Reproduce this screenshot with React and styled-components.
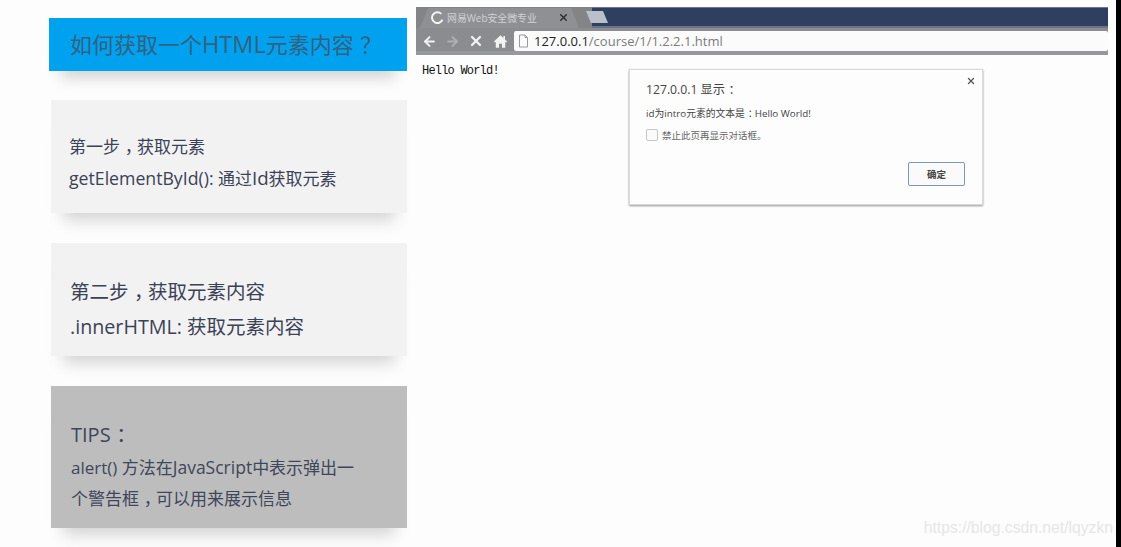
import React from "react";
import styled, { createGlobalStyle } from "styled-components";
import { ArrowLeft, ArrowRight, X } from "lucide-react";

const GlobalStyle = createGlobalStyle`
  html, body {
    margin: 0;
    padding: 0;
    background: #fdfdfd;
  }
  body {
    font-family: "Open Sans", "Noto Sans CJK SC", sans-serif;
  }
`;

const Page = styled.div`
  position: relative;
  width: 1121px;
  height: 547px;
  overflow: hidden;
  display: flex;
  background: #fdfdfd;
`;
const LeftColumn = styled.div`
  width: 358px;
  margin-left: 49px;
  padding-top: 18px;
  display: flex;
  flex-direction: column;
  flex-shrink: 0;
`;
const Card = styled.div`
  box-sizing: border-box;
  height: ${(p) => p.$height}px;
  margin-left: ${(p) => p.$inset || 0}px;
  margin-bottom: ${(p) => p.$gap || 0}px;
  padding: ${(p) => p.$top}px 0 0 ${(p) => p.$left}px;
  background: ${(p) => p.$bg};
  color: ${(p) => p.$color || "#3b4256"};
  box-shadow: 0 19px 15px -12px rgba(0, 0, 0, 0.17);
`;
const Line = styled.div`
  font-size: ${(p) => p.$size}px;
  line-height: ${(p) => p.$height}px;
  white-space: nowrap;
`;
// latin runs are a bit wider in the original font
const Latin = styled.span`
  font-size: ${(p) => p.$scale}em;
`;
const Punct = styled.span`
  font-feature-settings: "halt";
  margin-left: 0.28em;
  margin-right: 0.22em;
`;
const Browser = styled.div`
  width: 692px;
  margin: 7px 0 0 9px;
  flex-shrink: 0;
`;
const TabBar = styled.div`
  height: 21px;
  display: flex;
  background: #2f3f60;
  box-shadow: inset 0 -2px 0 #6c7486, inset 0 1px 0 #6f7788;
`;
const TabStrip = styled.div`
  width: 172px;
  padding-left: 4px;
  display: flex;
  background: #838488;
`;
const Tab = styled.div`
  width: 159px;
  height: 21px;
  box-sizing: border-box;
  padding-left: 11px;
  display: flex;
  align-items: center;
  background: #8f9094;
  clip-path: polygon(8px 1px, 151px 1px, 159px 100%, 0 100%);
  color: #d2d2d5;
  font-size: 9.9px;
`;
const TabTitle = styled.span`
  margin-left: 3px;
  width: 111px;
  white-space: nowrap;
  overflow: hidden;
`;
const NewTab = styled.div`
  width: 22px;
  height: 12px;
  margin: 4px 0 0 -6px;
  background: #b9c0ca;
  clip-path: polygon(0 0, 17px 0, 22px 100%, 5px 100%);
`;
const Toolbar = styled.div`
  height: 20px;
  padding: 3px 0 0 6px;
  display: flex;
  align-items: center;
  background: #8b8c90;
  color: #f2f2f2;
`;
const NavSlot = styled.div`
  width: ${(p) => p.$width || 23}px;
  display: flex;
  align-items: center;
  opacity: ${(p) => (p.$dim ? 0.35 : 1)};
`;
const Omnibox = styled.div`
  flex: 1;
  height: 20px;
  box-sizing: border-box;
  padding-left: 4px;
  display: flex;
  align-items: center;
  background: #fbfbfb;
  border-radius: 2px;
  font-size: 13px;
  color: #7b7b7b;
`;
const Host = styled.span`
  margin-left: 5px;
  font-weight: 500;
  color: #222;
`;
const ToolbarEdge = styled.div`
  height: 4px;
  background: #97989b;
`;
const PageText = styled.div`
  margin: 9px 0 0 6px;
  font-family: "Liberation Mono", monospace;
  font-size: 12px;
  line-height: 14px;
  letter-spacing: -0.8px;
  color: #111;
`;
const Dialog = styled.div`
  position: absolute;
  left: 629px;
  top: 69px;
  width: 354px;
  height: 136px;
  box-sizing: border-box;
  padding: 13px 0 0 16px;
  background: #fdfdfd;
  border: 1px solid #d9d9d9;
  box-shadow: 0 1px 2px rgba(0, 0, 0, 0.4);
  color: #444;
`;
const DialogClose = styled.div`
  position: absolute;
  top: 6px;
  right: 6px;
  display: flex;
  color: #555;
`;
const DialogTitle = styled.div`
  font-size: 12.2px;
  line-height: 13px;
  color: #444;
`;
const DialogText = styled.div`
  margin-top: 11px;
  font-size: 9.8px;
  line-height: 14px;
`;
const CheckRow = styled.div`
  margin-top: 7px;
  display: flex;
  align-items: center;
  font-size: 9.5px;
  color: #666;
`;
const CheckBox = styled.span`
  width: 10px;
  height: 10px;
  margin-right: 4px;
  border: 1px solid #c6c6c6;
  border-radius: 2px;
  background: #fafafa;
`;
const OkButton = styled.div`
  position: absolute;
  right: 17px;
  bottom: 18px;
  width: 55px;
  height: 22px;
  display: flex;
  align-items: center;
  justify-content: center;
  border: 1px solid #7d97b8;
  border-radius: 2px;
  font-size: 9.5px;
  font-weight: 700;
  color: #444;
  background: #fafafa;
`;
const Watermark = styled.div`
  position: absolute;
  right: 8px;
  bottom: 10px;
  font-family: "Liberation Sans", sans-serif;
  font-size: 15.7px;
  line-height: 18px;
  color: #e6e6e6;
`;
const BlackEdge = styled.div`
  position: absolute;
  top: 0;
  right: 0;
  bottom: 0;
  width: 5px;
  background: #000;
`;

const Spinner = () => (
  <svg width="13" height="13" viewBox="0 0 12 12" fill="none">
    <path d="M9.5 2.6A5 5 0 1 0 10.6 8" stroke="#f4f4f4" strokeWidth="1.8" />
  </svg>
);

const HomeIcon = () => (
  <svg width="15" height="15" viewBox="0 0 13 13" fill="#f2f2f2">
    <path d="M6.5 1 0.8 6.6 1.6 7.4 2.4 6.8V12H5.2V8.4H7.8V12H10.6V6.8L11.4 7.4 12.2 6.6 10.4 4.8V1.8H9V3.4Z" />
  </svg>
);

const PageIcon = () => (
  <svg width="11" height="14" viewBox="0 0 11 14" fill="none" stroke="#9a9a9a">
    <path d="M1.5 1H7L9.5 3.5V13H1.5ZM7 1V3.5H9.5" />
  </svg>
);

const App = () => (
  <>
    <GlobalStyle />
    <Page>
      <LeftColumn>
        <Card $height={53} $gap={29} $bg="#00a2f0" $top={8} $left={21} $color="#33617f">
          <Line $size={22} $height={36}>
            如何获取一个<Latin $scale={1.07}>HTML</Latin>元素内容<Punct>？</Punct>
          </Line>
        </Card>
        <Card $height={113} $gap={30} $inset={2} $bg="#f2f2f3" $top={31} $left={18}>
          <Line $size={17} $height={31}>第一步<Punct>，</Punct>获取元素</Line>
          <Line $size={17} $height={31}>
            <Latin $scale={1.04}>getElementById():</Latin> 通过<Latin $scale={1.1}>Id</Latin>获取元素
          </Line>
        </Card>
        <Card $height={113} $gap={30} $inset={2} $bg="#f2f2f3" $top={31} $left={19}>
          <Line $size={19.5} $height={35}>第二步<Punct>，</Punct>获取元素内容</Line>
          <Line $size={19.5} $height={35}>
            <Latin $scale={1.01}>.innerHTML:</Latin> 获取元素内容
          </Line>
        </Card>
        <Card $height={142} $inset={2} $bg="#bdbdbd" $top={31} $left={20} $color="#3f465c">
          <Line $size={20} $height={35}>TIPS<Punct>：</Punct></Line>
          <Line $size={17} $height={31}>
            alert() 方法在<Latin $scale={1.03}>JavaScript</Latin>中表示弹出一
          </Line>
          <Line $size={17} $height={31}>个警告框<Punct>，</Punct>可以用来展示信息</Line>
        </Card>
      </LeftColumn>
      <Browser>
        <TabBar>
          <TabStrip>
            <Tab>
              <Spinner />
              <TabTitle>网易Web安全微专业</TabTitle>
              <X size={11} strokeWidth={3} color="#2c2c2c" />
            </Tab>
          </TabStrip>
          <NewTab />
        </TabBar>
        <Toolbar>
          <NavSlot><ArrowLeft size={15} strokeWidth={3.2} /></NavSlot>
          <NavSlot $dim><ArrowRight size={15} strokeWidth={3.2} /></NavSlot>
          <NavSlot $width={25}><X size={16} strokeWidth={3.4} /></NavSlot>
          <NavSlot $width={21}><HomeIcon /></NavSlot>
          <Omnibox>
            <PageIcon />
            <Host>127.0.0.1</Host>/course/1/1.2.2.1.html
          </Omnibox>
        </Toolbar>
        <ToolbarEdge />
        <PageText>Hello World!</PageText>
      </Browser>
      <Dialog>
        <DialogClose><X size={10} strokeWidth={3} /></DialogClose>
        <DialogTitle>127.0.0.1 显示<Punct>：</Punct></DialogTitle>
        <DialogText>id为intro元素的文本是<Punct>：</Punct>Hello World!</DialogText>
        <CheckRow>
          <CheckBox />
          禁止此页再显示对话框。
        </CheckRow>
        <OkButton>确定</OkButton>
      </Dialog>
      <Watermark>https://blog.csdn.net/lqyzkn</Watermark>
      <BlackEdge />
    </Page>
  </>
);

export default App;
